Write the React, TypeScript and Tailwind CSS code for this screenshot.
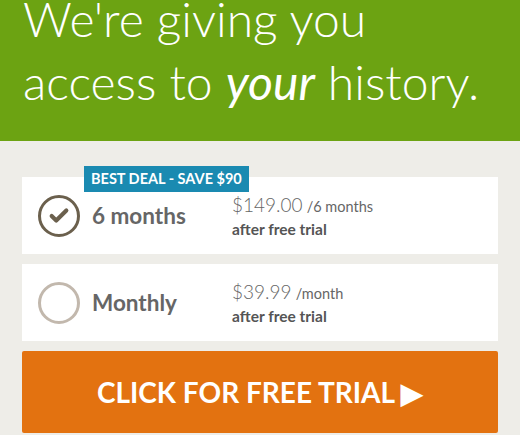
import { Check } from "lucide-react";

const FONT = { fontFamily: "'Source Sans Pro', Lato, 'Open Sans', sans-serif" };

interface PlanProps {
  selected: boolean;
  name: string;
  price: string;
  period: string;
  badge?: string;
}

function Plan({ selected, name, price, period, badge }: PlanProps) {
  return (
    <div className="relative flex h-[77px] items-center bg-white pl-[16px]">
      {badge && (
        <div className="absolute left-[62px] top-[-11px] bg-[#1a8ab1] px-[7px] text-[14.5px] font-bold leading-[26px] text-white">
          {badge}
        </div>
      )}
      <div
        className={`flex h-[42px] w-[42px] items-center justify-center rounded-full border-[3px] ${
          selected ? "border-[#6b604d]" : "border-[#c2b8ad]"
        }`}
      >
        {selected && <Check className="h-[22px] w-[22px] text-[#6b604d]" strokeWidth={4.5} />}
      </div>
      <div className="ml-[12px] w-[140px] text-[22.5px] font-bold text-[#666666]">{name}</div>
      <div className="flex flex-col text-[#666666]">
        <div className="leading-[24px]">
          <span className="text-[19px] font-light">{price}</span>{" "}
          <span className="text-[14.5px]">{period}</span>
        </div>
        <div className="text-[15.5px] font-bold leading-[20px] text-[#555555]">after free trial</div>
      </div>
    </div>
  );
}

export default function App() {
  return (
    <div className="h-[435px] w-[520px] overflow-hidden bg-[#eeede8]" style={FONT}>
      <div className="h-[141px] overflow-hidden bg-[#6ca312] px-[23px] text-[48px] font-light leading-[63px] text-white">
        <div className="mt-[-13px]">We're giving you</div>
        <div>
          access to <i className="font-normal">your</i> history.
        </div>
      </div>
      <div className="flex flex-col gap-[10px] px-[22px] pt-[36px]">
        <Plan selected name="6 months" price="$149.00" period="/6 months" badge="BEST DEAL - SAVE $90" />
        <Plan selected={false} name="Monthly" price="$39.99" period="/month" />
        <div className="flex h-[82px] items-center justify-center rounded-[2px] bg-[#e37210] text-[28px] font-bold text-white">
          CLICK FOR FREE TRIAL ▶
        </div>
      </div>
    </div>
  );
}
